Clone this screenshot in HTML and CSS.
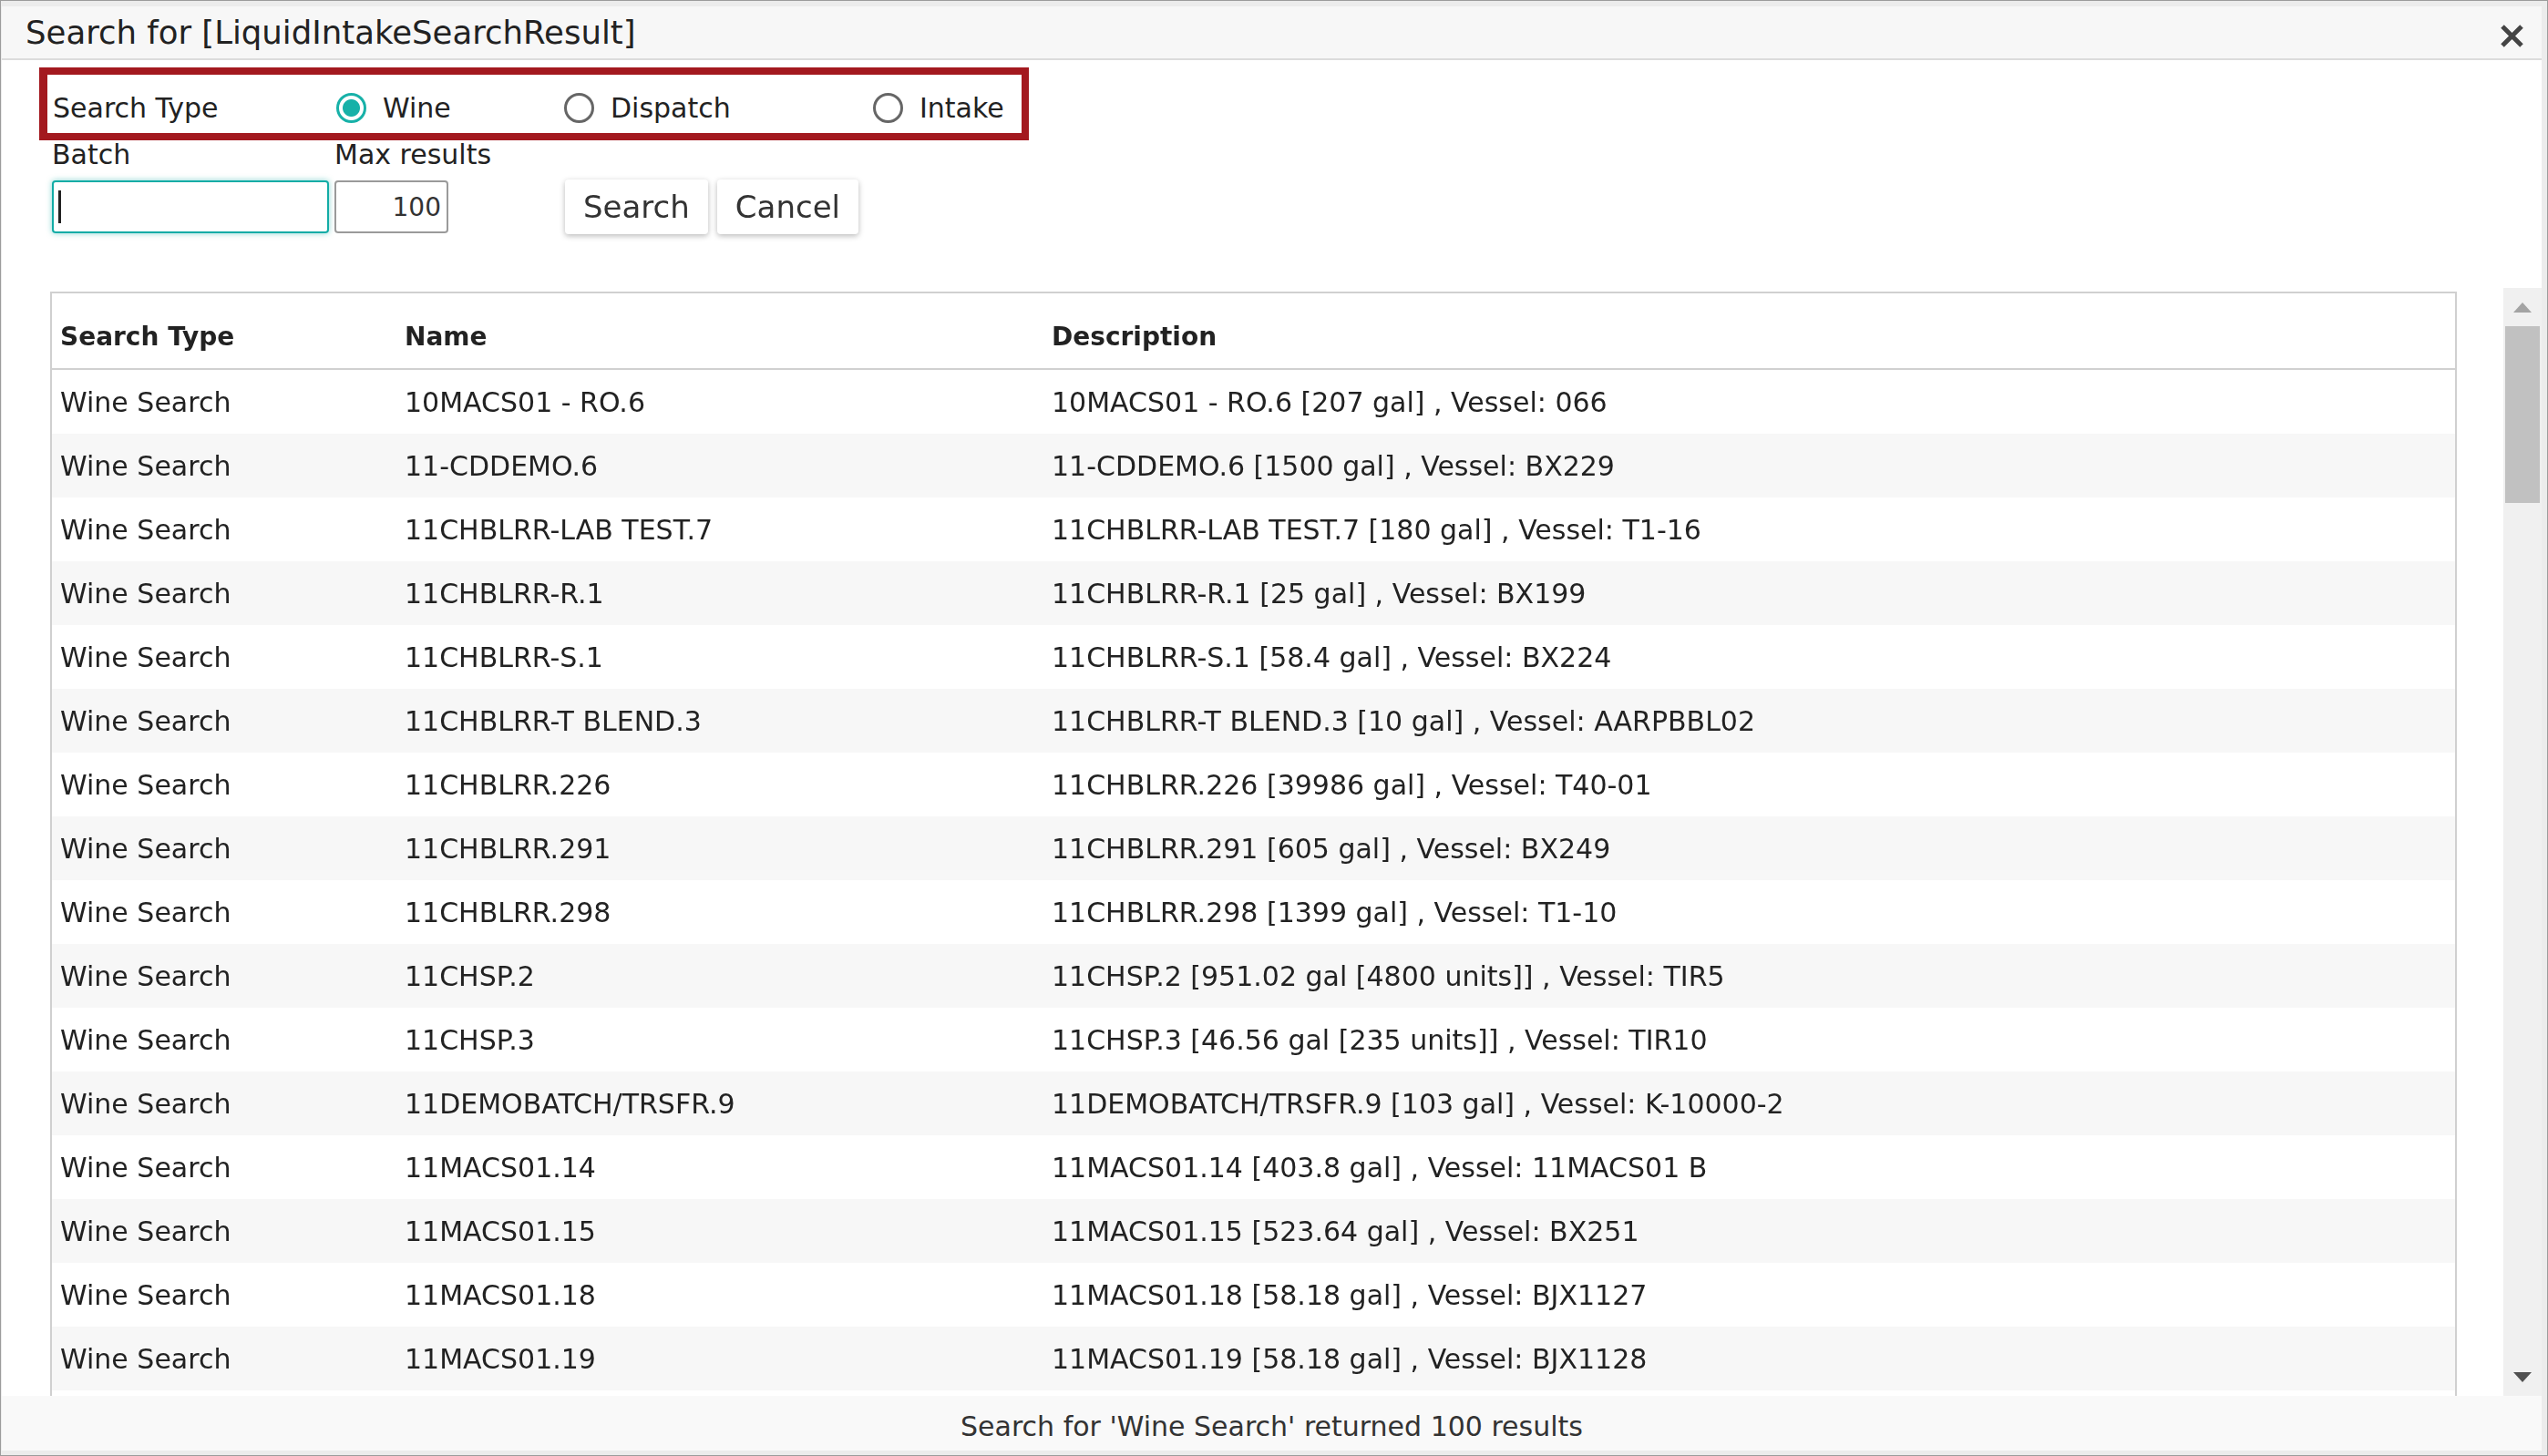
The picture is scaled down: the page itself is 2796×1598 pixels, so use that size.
FILE: index.html
```html
<!DOCTYPE html>
<html lang="en">
<head>
    <meta charset="UTF-8">
    <meta name="viewport" content="width=device-width, initial-scale=1.0">
    <title>Search for [LiquidIntakeSearchResult]</title>
    <link rel="stylesheet" href="styles.css">
</head>
<body>
    <div class="frame">
        <div class="dialog">
            <div class="titlebar">
                <span class="title">Search for [LiquidIntakeSearchResult]</span>
                <button class="close" title="Close">
                    <svg width="25" height="25" viewBox="0 0 25 25">
                        <path d="M2 2 L23 23 M23 2 L2 23" stroke="#444" stroke-width="5"/>
                    </svg>
                </button>
            </div>

            <div class="form">
                <div class="search-type">
                    <span class="label">Search Type</span>
                    <label class="option"><input type="radio" name="type" checked> Wine</label>
                    <label class="option"><input type="radio" name="type"> Dispatch</label>
                    <label class="option"><input type="radio" name="type"> Intake</label>
                </div>
                <div class="fields">
                    <div class="field field-batch">
                        <span class="label">Batch</span>
                        <input type="text" class="input-batch focused" autofocus>
                    </div>
                    <div class="field field-max">
                        <span class="label">Max results</span>
                        <input type="text" class="input-max" value="100">
                    </div>
                    <div class="buttons">
                        <button class="btn">Search</button>
                        <button class="btn">Cancel</button>
                    </div>
                </div>
            </div>

            <div class="results">
                <div class="table-wrap">
                    <table class="grid">
                        <colgroup>
                            <col class="col-type">
                            <col class="col-name">
                            <col>
                        </colgroup>
                        <thead>
                            <tr><th>Search Type</th><th>Name</th><th>Description</th></tr>
                        </thead>
                        <tbody>
                            <tr><td>Wine Search</td><td>10MACS01 - RO.6</td><td>10MACS01 - RO.6 [207 gal] , Vessel: 066</td></tr>
                            <tr><td>Wine Search</td><td>11-CDDEMO.6</td><td>11-CDDEMO.6 [1500 gal] , Vessel: BX229</td></tr>
                            <tr><td>Wine Search</td><td>11CHBLRR-LAB TEST.7</td><td>11CHBLRR-LAB TEST.7 [180 gal] , Vessel: T1-16</td></tr>
                            <tr><td>Wine Search</td><td>11CHBLRR-R.1</td><td>11CHBLRR-R.1 [25 gal] , Vessel: BX199</td></tr>
                            <tr><td>Wine Search</td><td>11CHBLRR-S.1</td><td>11CHBLRR-S.1 [58.4 gal] , Vessel: BX224</td></tr>
                            <tr><td>Wine Search</td><td>11CHBLRR-T BLEND.3</td><td>11CHBLRR-T BLEND.3 [10 gal] , Vessel: AARPBBL02</td></tr>
                            <tr><td>Wine Search</td><td>11CHBLRR.226</td><td>11CHBLRR.226 [39986 gal] , Vessel: T40-01</td></tr>
                            <tr><td>Wine Search</td><td>11CHBLRR.291</td><td>11CHBLRR.291 [605 gal] , Vessel: BX249</td></tr>
                            <tr><td>Wine Search</td><td>11CHBLRR.298</td><td>11CHBLRR.298 [1399 gal] , Vessel: T1-10</td></tr>
                            <tr><td>Wine Search</td><td>11CHSP.2</td><td>11CHSP.2 [951.02 gal [4800 units]] , Vessel: TIR5</td></tr>
                            <tr><td>Wine Search</td><td>11CHSP.3</td><td>11CHSP.3 [46.56 gal [235 units]] , Vessel: TIR10</td></tr>
                            <tr><td>Wine Search</td><td>11DEMOBATCH/TRSFR.9</td><td>11DEMOBATCH/TRSFR.9 [103 gal] , Vessel: K-10000-2</td></tr>
                            <tr><td>Wine Search</td><td>11MACS01.14</td><td>11MACS01.14 [403.8 gal] , Vessel: 11MACS01 B</td></tr>
                            <tr><td>Wine Search</td><td>11MACS01.15</td><td>11MACS01.15 [523.64 gal] , Vessel: BX251</td></tr>
                            <tr><td>Wine Search</td><td>11MACS01.18</td><td>11MACS01.18 [58.18 gal] , Vessel: BJX1127</td></tr>
                            <tr><td>Wine Search</td><td>11MACS01.19</td><td>11MACS01.19 [58.18 gal] , Vessel: BJX1128</td></tr>
                        </tbody>
                    </table>
                </div>
                <div class="scrollbar">
                    <div class="arrow arrow-up"></div>
                    <div class="thumb"></div>
                    <div class="track"></div>
                    <div class="arrow arrow-down"></div>
                </div>
            </div>

            <div class="footer">Search for 'Wine Search' returned 100 results</div>
        </div>
    </div>
</body>
</html>
```

FILE: styles.css
```css
html, body {
    margin: 0;
    height: 100%;
}
body {
    font-family: "DejaVu Sans", "Liberation Sans", sans-serif;
    color: #222;
    background-color: #ececec;
}
.frame {
    box-sizing: border-box;
    height: 100vh;
    border: 1px solid #9c9c9c;
    padding: 6px 6px 5px 1px;
}
.dialog {
    display: flex;
    flex-direction: column;
    height: 100%;
    background: #fff;
}

/* title bar */
.titlebar {
    display: flex;
    align-items: center;
    justify-content: space-between;
    height: 57px;
    padding: 0 20px 0 26px;
    background: #f7f7f7;
    border-bottom: 2px solid #dcdcdc;
    flex-shrink: 0;
}
.title {
    font-size: 35.5px;
    color: #222;
}
.close {
    border: none;
    background: none;
    padding: 0;
    margin-top: 8px;
    width: 25px;
    height: 25px;
    cursor: pointer;
}
.close svg {
    display: block;
}

/* form */
.form {
    padding: 8px 0 60px 41px;
    flex-shrink: 0;
}
.label {
    font-size: 30px;
    color: #222;
    white-space: nowrap;
}
.search-type {
    box-sizing: border-box;
    display: grid;
    grid-template-columns: 311px 250px 339px auto;
    align-items: center;
    width: 1086px;
    height: 80px;
    padding: 9px 6px 0;
    border: 8px solid #a3191f;
    border-left-width: 9px;
}
.option {
    display: flex;
    align-items: center;
    font-size: 30px;
    color: #222;
}
.option input {
    appearance: none;
    -webkit-appearance: none;
    box-sizing: border-box;
    width: 33px;
    height: 33px;
    margin: 0 18px 0 0;
    border: 3px solid #666;
    border-radius: 50%;
    background: #fff;
}
.option input:checked {
    border-color: #17b1a8;
    background: radial-gradient(circle, #17b1a8 0 9px, #fff 10px);
}
.fields {
    display: flex;
    align-items: flex-end;
}
.field {
    display: flex;
    flex-direction: column;
}
.field .label {
    line-height: 24px;
    height: 24px;
    padding-top: 4px;
    margin-bottom: 16px;
}
.field-batch {
    width: 304px;
    margin-left: 14px;
}
.field-max {
    width: 125px;
    margin-left: 6px;
}
.field input {
    box-sizing: border-box;
    width: 100%;
    height: 58px;
    border-radius: 4px;
    font-family: inherit;
    font-size: 28px;
    color: #333;
    outline: none;
}
.input-batch {
    padding: 0 6px;
    border: 2px solid #12aca6;
    box-shadow: 0 0 6px rgba(18, 172, 166, 0.5);
}
.input-batch.focused {
    background: linear-gradient(#222, #222) no-repeat 5px center / 3px 36px, #fff;
}
.input-max {
    padding: 0 6px;
    text-align: right;
    border: 2px solid #9a9a9a;
}
.buttons {
    display: flex;
    gap: 10px;
    margin-left: 128px;
    margin-bottom: -1px;
}
.btn {
    height: 60px;
    padding: 0 20px;
    font-family: inherit;
    font-size: 34px;
    color: #333;
    background: #fff;
    border: none;
    border-radius: 4px;
    box-shadow: 0 2px 6px rgba(0, 0, 0, 0.28);
    cursor: pointer;
}

/* results */
.results {
    display: flex;
    flex: 1;
    min-height: 0;
}
.table-wrap {
    flex: 1;
    overflow: hidden;
    padding: 4px 51px 0 53px;
}
.grid {
    width: 100%;
    table-layout: fixed;
    border-collapse: separate;
    border-spacing: 0;
    border: 2px solid #d0d0d0;
    border-bottom: none;
    padding-bottom: 10px;
}
.col-type {
    width: 378px;
}
.col-name {
    width: 710px;
}
.grid th {
    height: 36px;
    padding: 30px 9px 16px;
    line-height: 36px;
    text-align: left;
    font-size: 28px;
    font-weight: bold;
    color: #222;
    border-bottom: 2px solid #d0d0d0;
}
.grid td {
    height: 68px;
    padding: 2px 9px 0;
    line-height: 68px;
    font-size: 30px;
    color: #222;
    white-space: nowrap;
}
.grid tbody tr:nth-child(even) td {
    background: #f7f7f7;
}

/* scrollbar */
.scrollbar {
    display: flex;
    flex-direction: column;
    width: 42px;
    background: #f0f0f0;
    flex-shrink: 0;
}
.arrow {
    height: 42px;
    display: flex;
    align-items: center;
    justify-content: center;
}
.arrow::before {
    content: "";
    width: 0;
    height: 0;
    border-left: 10px solid transparent;
    border-right: 10px solid transparent;
}
.arrow-up::before {
    border-bottom: 11px solid #a3a3a3;
}
.arrow-down::before {
    border-top: 11px solid #505050;
}
.thumb {
    height: 194px;
    margin: 0 2px;
    background: #c1c1c1;
}
.track {
    flex: 1;
}

/* footer */
.footer {
    height: 52px;
    padding-top: 8px;
    line-height: 52px;
    text-align: center;
    font-size: 30px;
    color: #333;
    background: #f9f9f9;
    flex-shrink: 0;
}
```
